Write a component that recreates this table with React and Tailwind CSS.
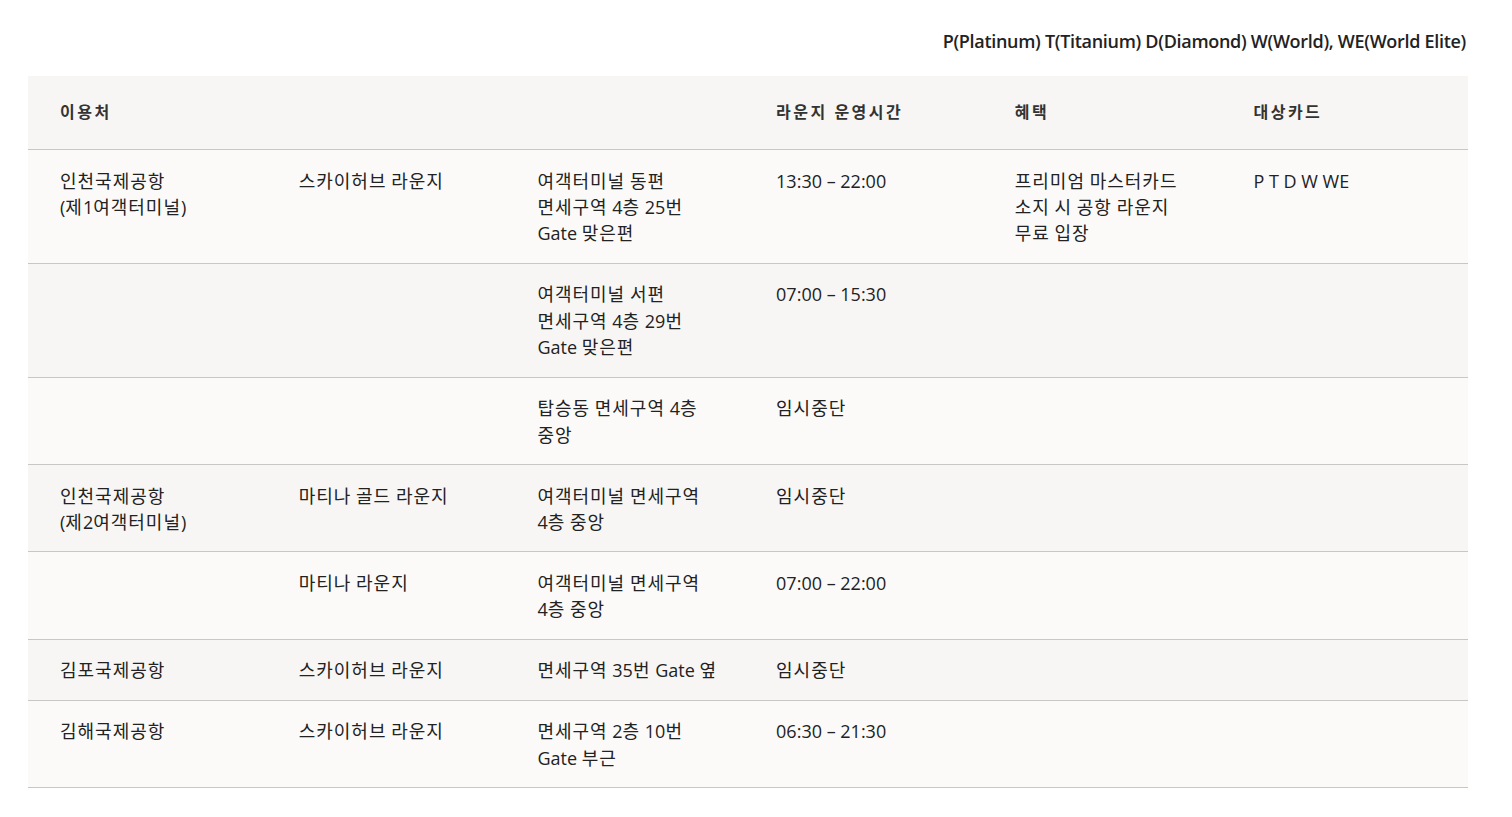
function KText({ t }) {
  const lines = t.split("\n");
  return lines.map((line, li) => (
    <div key={li}>
      {line.split(/([\uAC00-\uD7A3]+)/).map((part, pi) =>
        /[\uAC00-\uD7A3]/.test(part) ? (
          <span key={pi} className="tracking-[1px]">{part}</span>
        ) : (
          <span key={pi}>{part}</span>
        )
      )}
    </div>
  ));
}

export default function App() {
  const font = { fontFamily: '"Open Sans", "Noto Sans CJK KR", sans-serif' };
  const rows = [
    ["인천국제공항\n(제1여객터미널)", "스카이허브 라운지", "여객터미널 동편\n면세구역 4층 25번\nGate 맞은편", "13:30 – 22:00", "프리미엄 마스터카드\n소지 시 공항 라운지\n무료 입장", "P T D W WE"],
    ["", "", "여객터미널 서편\n면세구역 4층 29번\nGate 맞은편", "07:00 – 15:30", "", ""],
    ["", "", "탑승동 면세구역 4층\n중앙", "임시중단", "", ""],
    ["인천국제공항\n(제2여객터미널)", "마티나 골드 라운지", "여객터미널 면세구역\n4층 중앙", "임시중단", "", ""],
    ["", "마티나 라운지", "여객터미널 면세구역\n4층 중앙", "07:00 – 22:00", "", ""],
    ["김포국제공항", "스카이허브 라운지", "면세구역 35번 Gate 옆", "임시중단", "", ""],
    ["김해국제공항", "스카이허브 라운지", "면세구역 2층 10번\nGate 부근", "06:30 – 21:30", "", ""],
  ];
  const headers = ["이용처", "", "", "라운지 운영시간", "혜택", "대상카드"];
  const cols = "grid grid-cols-[238.7px_238.7px_238.7px_238.7px_238.7px_1fr]";
  return (
    <div className="min-h-[817px] bg-white text-[#222]" style={font}>
      <div className="ml-[28px] w-[1440px] pt-[29px]">
        <div className="text-right pr-[2px] text-[18px] leading-[24px] font-semibold text-[#222] tracking-[-0.3px]">
          P(Platinum) T(Titanium) D(Diamond) W(World), WE(World Elite)
        </div>
        <div className="mt-[23px]">
          <div className={cols + " bg-[#f7f6f5] border-b border-[#c9c7c5]"}>
            {headers.map((h, i) => (
              <div key={i} className="pl-[32px] pt-[23px] pb-[24px] text-[16px] leading-[26px] font-semibold tracking-[2.5px] text-[#333]">
                {h}
              </div>
            ))}
          </div>
          {rows.map((r, ri) => (
            <div
              key={ri}
              className={
                cols +
                " border-b border-[#c9c7c5] " +
                (ri % 2 === 0 ? "bg-[#fbfaf9]" : "bg-[#f7f6f5]")
              }
            >
              {r.map((t, ci) => (
                <div key={ci} className="pl-[32px] pr-[4px] pt-[17.5px] pb-[16.1px] text-[18px] leading-[26.4px] text-[#222]">
                  <KText t={t} />
                </div>
              ))}
            </div>
          ))}
        </div>
      </div>
    </div>
  );
}
